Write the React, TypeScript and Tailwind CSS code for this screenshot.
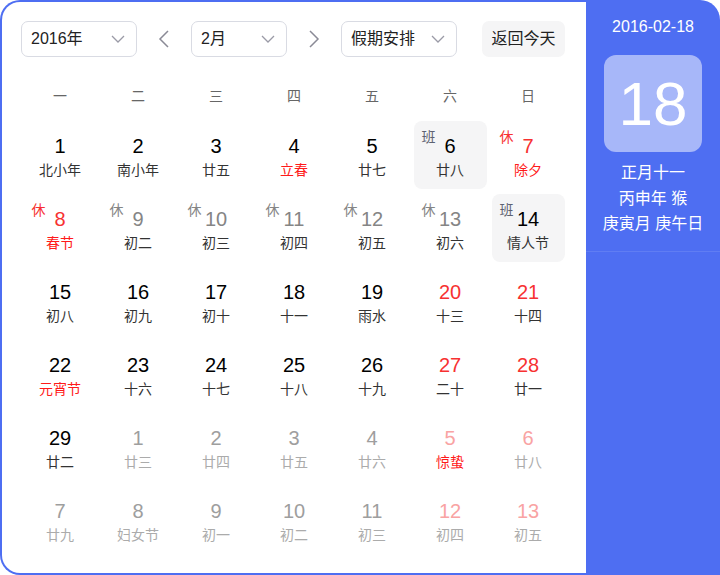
type Day = {
  n: number
  lunar: string
  num?: string
  lun?: string
  mark?: '休' | '班'
  markColor?: string
  box?: boolean
}

const RED = 'text-[#f73131]'
const FEST = 'text-[#ff1a1a]'
const REST = 'text-[#858585]'
const NEXT = 'text-[#9e9e9e]'
const NEXT_L = 'text-[#ababab]'
const NEXT_R = 'text-[#f9a3a3]'

const days: Day[] = [
  { n: 1, lunar: '北小年' },
  { n: 2, lunar: '南小年' },
  { n: 3, lunar: '廿五' },
  { n: 4, lunar: '立春', lun: FEST },
  { n: 5, lunar: '廿七' },
  { n: 6, lunar: '廿八', mark: '班', markColor: 'text-[#5d6272]', box: true },
  { n: 7, lunar: '除夕', num: RED, lun: FEST, mark: '休', markColor: RED },
  { n: 8, lunar: '春节', num: RED, lun: FEST, mark: '休', markColor: RED },
  { n: 9, lunar: '初二', num: REST, mark: '休', markColor: REST },
  { n: 10, lunar: '初三', num: REST, mark: '休', markColor: REST },
  { n: 11, lunar: '初四', num: REST, mark: '休', markColor: REST },
  { n: 12, lunar: '初五', num: REST, mark: '休', markColor: REST },
  { n: 13, lunar: '初六', num: REST, mark: '休', markColor: REST },
  { n: 14, lunar: '情人节', mark: '班', markColor: 'text-[#5d6272]', box: true },
  { n: 15, lunar: '初八' },
  { n: 16, lunar: '初九' },
  { n: 17, lunar: '初十' },
  { n: 18, lunar: '十一' },
  { n: 19, lunar: '雨水' },
  { n: 20, lunar: '十三', num: RED },
  { n: 21, lunar: '十四', num: RED },
  { n: 22, lunar: '元宵节', lun: FEST },
  { n: 23, lunar: '十六' },
  { n: 24, lunar: '十七' },
  { n: 25, lunar: '十八' },
  { n: 26, lunar: '十九' },
  { n: 27, lunar: '二十', num: RED },
  { n: 28, lunar: '廿一', num: RED },
  { n: 29, lunar: '廿二' },
  { n: 1, lunar: '廿三', num: NEXT, lun: NEXT_L },
  { n: 2, lunar: '廿四', num: NEXT, lun: NEXT_L },
  { n: 3, lunar: '廿五', num: NEXT, lun: NEXT_L },
  { n: 4, lunar: '廿六', num: NEXT, lun: NEXT_L },
  { n: 5, lunar: '惊蛰', num: NEXT_R, lun: FEST },
  { n: 6, lunar: '廿八', num: NEXT_R, lun: NEXT_L },
  { n: 7, lunar: '廿九', num: NEXT, lun: NEXT_L },
  { n: 8, lunar: '妇女节', num: NEXT, lun: NEXT_L },
  { n: 9, lunar: '初一', num: NEXT, lun: NEXT_L },
  { n: 10, lunar: '初二', num: NEXT, lun: NEXT_L },
  { n: 11, lunar: '初三', num: NEXT, lun: NEXT_L },
  { n: 12, lunar: '初四', num: NEXT_R, lun: NEXT_L },
  { n: 13, lunar: '初五', num: NEXT_R, lun: NEXT_L },
]

const weekdays = ['一', '二', '三', '四', '五', '六', '日']

function Chevron() {
  return (
    <svg width="14" height="8" viewBox="0 0 14 8" fill="none">
      <polyline points="1,1 7,7 13,1" stroke="#9a9aa6" strokeWidth="1.3" />
    </svg>
  )
}

function Select({ label, width }: { label: string; width: string }) {
  return (
    <div
      className={`${width} h-[36px] flex items-center justify-between pl-[9px] pr-[11px] border border-[#d9dbe3] rounded-[7px] text-[16px] text-[#222]`}
    >
      <span>{label}</span>
      <Chevron />
    </div>
  )
}

function Arrow({ dir }: { dir: 'l' | 'r' }) {
  return (
    <svg width="12" height="18" viewBox="0 0 12 18" fill="none">
      <polyline
        points={dir === 'l' ? '10,1 2,9 10,17' : '2,1 10,9 2,17'}
        stroke="#8a8a96"
        strokeWidth="1.5"
      />
    </svg>
  )
}

export default function App() {
  return (
    <div
      className="w-[720px] h-[575px] flex bg-[#4e6ef2] rounded-[20px] rounded-br-none p-[2px] pr-0"
      style={{ fontFamily: '"Liberation Sans", "Noto Sans CJK SC", sans-serif' }}
    >
      <div className="w-[584px] h-full bg-white rounded-l-[18px] px-[19px] pt-[19px]">
        {/* toolbar */}
        <div className="flex items-center h-[36px]">
          <Select label="2016年" width="w-[116px]" />
          <div className="w-[54px] flex justify-center">
            <Arrow dir="l" />
          </div>
          <Select label="2月" width="w-[96px]" />
          <div className="w-[54px] flex justify-center">
            <Arrow dir="r" />
          </div>
          <Select label="假期安排" width="w-[116px]" />
          <button className="ml-auto mr-[2px] w-[83px] h-[36px] rounded-[7px] bg-[#f5f5f6] text-[16px] text-[#222]">
            返回今天
          </button>
        </div>

        {/* weekday header */}
        <div className="grid grid-cols-7 mt-[19px] h-[40px] items-center">
          {weekdays.map((w) => (
            <div key={w} className="text-center text-[14px] text-[#666]">
              {w}
            </div>
          ))}
        </div>

        {/* days */}
        <div className="grid grid-cols-7 mt-[2px]">
          {days.map((d, i) => (
            <div key={i} className="h-[73px] pt-[3px]">
              <div
                className={`relative w-[73px] h-[68px] mx-auto rounded-[8px] flex flex-col items-center pt-[13px] ${
                  d.box ? 'bg-[#f5f5f6]' : ''
                }`}
              >
                {d.mark && (
                  <span
                    className={`absolute left-[8px] top-[9px] text-[14px] leading-[14px] ${d.markColor}`}
                  >
                    {d.mark}
                  </span>
                )}
                <span className={`text-[20px] leading-[24px] ${d.num ?? 'text-black'}`}>{d.n}</span>
                <span className={`mt-[2px] text-[14px] leading-[20px] ${d.lun ?? 'text-[#333]'}`}>
                  {d.lunar}
                </span>
              </div>
            </div>
          ))}
        </div>
      </div>

      {/* side panel */}
      <div className="flex-1 flex flex-col items-center pt-[15px] text-white">
        <div className="text-[16px] leading-[20px]">2016-02-18</div>
        <div className="mt-[18px] w-[98px] h-[97px] rounded-[12px] bg-white/50 flex items-center justify-center text-[62px] leading-none">
          18
        </div>
        <div className="mt-[8px] text-[16px] leading-[25.5px] text-center">
          <div>正月十一</div>
          <div>丙申年 猴</div>
          <div>庚寅月 庚午日</div>
        </div>
        <div className="mt-[14px] h-px w-full bg-white/10" />
      </div>
    </div>
  )
}
